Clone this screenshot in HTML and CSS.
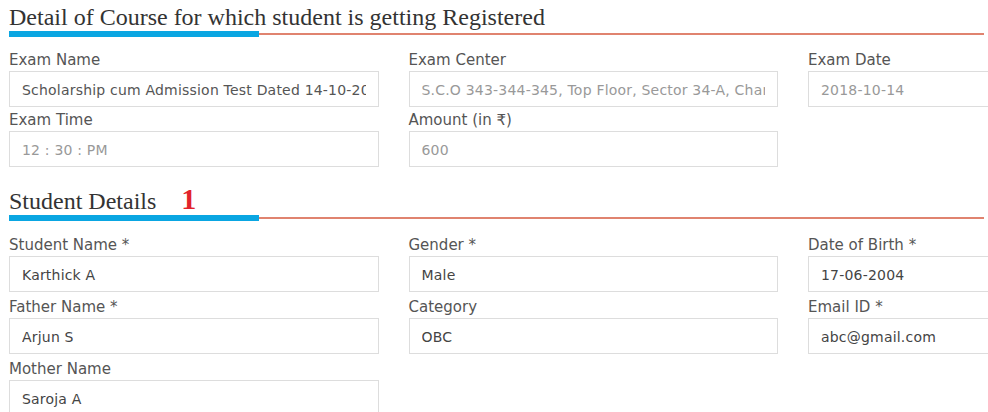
FILE: index.html
```html
<!DOCTYPE html>
<html>
<head>
<meta charset="UTF-8">
<title>Registration</title>
<link rel="stylesheet" href="styles.css">
</head>
<body>
	<!-- 考试信息 -->
	<h2 class="section-title">Detail of Course for which student is getting Registered</h2>
	<div class="title-rule"><span class="rule-accent"></span><span class="rule-line"></span></div>
	<div class="field-grid">
		<div class="field">
			<label>Exam Name</label>
			<input class="form-control filled" type="text" value="Scholarship cum Admission Test Dated 14-10-2018" readonly>
		</div>
		<div class="field">
			<label>Exam Center</label>
			<input class="form-control" type="text" value="S.C.O 343-344-345, Top Floor, Sector 34-A, Chandigarh" readonly>
		</div>
		<div class="field">
			<label>Exam Date</label>
			<input class="form-control" type="text" value="2018-10-14" readonly>
		</div>
		<div class="field">
			<label>Exam Time</label>
			<input class="form-control" type="text" value="12 : 30 : PM" readonly>
		</div>
		<div class="field">
			<label>Amount (in ₹)</label>
			<input class="form-control" type="text" value="600" readonly>
		</div>
	</div>

	<!-- 学生信息 -->
	<h2 class="section-title second">Student Details<span class="step-no">1</span></h2>
	<div class="title-rule"><span class="rule-accent"></span><span class="rule-line"></span></div>
	<div class="field-grid students">
		<div class="field">
			<label>Student Name *</label>
			<input class="form-control dark" type="text" value="Karthick A">
		</div>
		<div class="field">
			<label>Gender *</label>
			<input class="form-control dark" type="text" value="Male">
		</div>
		<div class="field">
			<label>Date of Birth *</label>
			<input class="form-control dark" type="text" value="17-06-2004">
		</div>
		<div class="field">
			<label>Father Name *</label>
			<input class="form-control dark" type="text" value="Arjun S">
		</div>
		<div class="field">
			<label>Category</label>
			<input class="form-control dark" type="text" value="OBC">
		</div>
		<div class="field">
			<label>Email ID *</label>
			<input class="form-control dark" type="text" value="abc@gmail.com">
		</div>
		<div class="field">
			<label>Mother Name</label>
			<input class="form-control dark" type="text" value="Saroja A">
		</div>
	</div>
</body>
</html>
```

FILE: styles.css
```css
html{
	overflow: hidden;
}
body{
	margin: 0;
	padding: 3px 0 0 9px;
	font-family: "DejaVu Sans", Verdana, sans-serif;
	color: #555;
	background: #fff;
}
.section-title{
	margin: 0;
	font-family: "Liberation Serif", "Times New Roman", serif;
	font-weight: normal;
	font-size: 24px;
	line-height: 28px;
	color: #333;
}
.section-title.second{
	margin-top: 20px;
}
.step-no{
	margin-left: 25px;
	font-family: "Liberation Serif", serif;
	font-weight: bold;
	font-size: 30px;
	line-height: 0;
	color: #e2232b;
}
.title-rule{
	display: flex;
	align-items: center;
	width: 975px;
	height: 6px;
}
.rule-accent{
	width: 250px;
	height: 6px;
	background: #0aa6e2;
}
.rule-line{
	flex: 1;
	height: 2px;
	background: #e0836f;
}
.field-grid{
	display: grid;
	grid-template-columns: repeat(3, 369.5px);
	column-gap: 30px;
	row-gap: 3px;
	margin-top: 13px;
}
.field-grid.students{
	row-gap: 5px;
	margin-top: 14px;
}
.field label{
	display: block;
	font-size: 15px;
	line-height: 21px;
	color: #555;
}
.form-control{
	display: block;
	box-sizing: border-box;
	width: 100%;
	height: 36px;
	margin: 0;
	padding: 1px 12px 0;
	border: 1px solid #ddd;
	font-family: inherit;
	font-size: 14px;
	letter-spacing: 0.2px;
	color: #999;
	background: #fff;
	outline: none;
}
.form-control.filled{
	color: #555;
}
.form-control.dark{
	color: #444;
}
```
